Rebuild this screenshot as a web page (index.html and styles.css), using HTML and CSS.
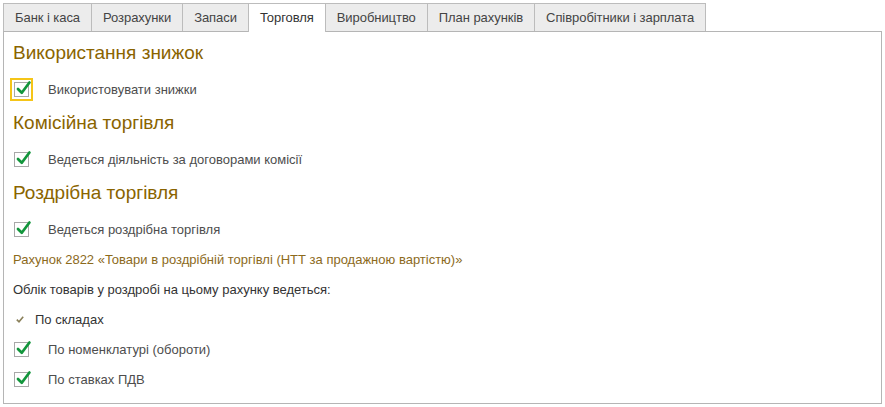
FILE: index.html
```html
<!DOCTYPE html>
<html lang="uk">

<head>
    <meta charset="UTF-8">
    <meta name="viewport" content="width=device-width, initial-scale=1.0">
    <title>Торговля</title>
    <link rel="stylesheet" href="styles.css">
</head>

<body>
    <div class="page">
        <!-- вкладки -->
        <div class="tabs">
            <div class="tab">Банк і каса</div>
            <div class="tab">Розрахунки</div>
            <div class="tab">Запаси</div>
            <div class="tab active">Торговля</div>
            <div class="tab">Виробництво</div>
            <div class="tab">План рахунків</div>
            <div class="tab">Співробітники і зарплата</div>
        </div>

        <div class="panel">
            <h2 class="group">Використання знижок</h2>
            <div class="row">
                <span class="cb focus">
                    <span class="box"><svg viewBox="0 0 20 20"><path d="M3.5 10.5 L8 15 L17 3" /></svg></span>
                </span>
                <span class="label">Використовувати знижки</span>
            </div>

            <h2 class="group">Комісійна торгівля</h2>
            <div class="row">
                <span class="cb">
                    <span class="box"><svg viewBox="0 0 20 20"><path d="M3.5 10.5 L8 15 L17 3" /></svg></span>
                </span>
                <span class="label">Ведеться діяльність за договорами комісії</span>
            </div>

            <h2 class="group">Роздрібна торгівля</h2>
            <div class="row">
                <span class="cb">
                    <span class="box"><svg viewBox="0 0 20 20"><path d="M3.5 10.5 L8 15 L17 3" /></svg></span>
                </span>
                <span class="label">Ведеться роздрібна торгівля</span>
            </div>

            <div class="row link">Рахунок 2822 «Товари в роздрібній торгівлі (НТТ за продажною вартістю)»</div>
            <div class="row text">Облік товарів у роздробі на цьому рахунку ведеться:</div>

            <div class="row">
                <svg class="tick" viewBox="0 0 8 7"><path d="M0.8 3.6 L3 5.8 L7.2 0.8" /></svg>
                <span class="text">По складах</span>
            </div>
            <div class="row">
                <span class="cb">
                    <span class="box"><svg viewBox="0 0 20 20"><path d="M3.5 10.5 L8 15 L17 3" /></svg></span>
                </span>
                <span class="label">По номенклатурі (обороти)</span>
            </div>
            <div class="row">
                <span class="cb">
                    <span class="box"><svg viewBox="0 0 20 20"><path d="M3.5 10.5 L8 15 L17 3" /></svg></span>
                </span>
                <span class="label">По ставках ПДВ</span>
            </div>
        </div>
    </div>
</body>

</html>
```

FILE: styles.css
```css
* {
    margin: 0;
    padding: 0;
    box-sizing: border-box;
}

body {
    background: #fff;
    font-family: "Liberation Sans", Arial, sans-serif;
    font-size: 13px;
    color: #4d4d4d;
}

.page {
    padding: 3px;
    height: 407px;
    display: flex;
    flex-direction: column;
}

.tabs {
    display: flex;
    height: 28px;
    position: relative;
    z-index: 1;
}

.tab {
    height: 28px;
    line-height: 27px;
    padding: 0 11px;
    background: #ececec;
    border: 1px solid #bcbcbc;
    border-bottom: none;
    margin-right: -1px;
    color: #444;
    letter-spacing: -0.06px;
}

.tab.active {
    background: #fff;
    height: 29px;
    color: #333;
}

.panel {
    flex: 1;
    border: 1px solid #b5b5b5;
    padding: 8px 10px 0 10px;
    display: flex;
    flex-direction: column;
    gap: 6px;
}

.group {
    font-size: 19px;
    font-weight: normal;
    color: #8a6400;
    height: 26px;
    line-height: 26px;
    margin: 3px 0 5px -1px;
}

.group:first-child {
    margin-top: 0;
}

.row {
    height: 24px;
    display: flex;
    align-items: center;
}

.cb {
    width: 23px;
    height: 23px;
    margin-left: -4px;
    display: flex;
    align-items: center;
    justify-content: center;
    border: 2px solid transparent;
}

.cb.focus {
    border-color: #f5c518;
}

.box {
    width: 15px;
    height: 15px;
    border: 1px solid #a8a8a8;
    background: #fff;
    position: relative;
}

.box svg {
    position: absolute;
    left: 0;
    top: -3px;
    width: 17px;
    height: 17px;
}

.box path {
    fill: none;
    stroke: #12963c;
    stroke-width: 3.2;
    stroke-linecap: round;
    stroke-linejoin: round;
}

.label {
    margin-left: 15px;
}

.link {
    color: #8c6a1c;
    margin-left: -1px;
}

.text {
    color: #333;
}

.row.text {
    margin-left: -1px;
}

.tick {
    width: 8px;
    height: 7px;
    margin: 0 11px 0 2px;
}

.tick path {
    fill: none;
    stroke: #8a805a;
    stroke-width: 1.6;
}
```
